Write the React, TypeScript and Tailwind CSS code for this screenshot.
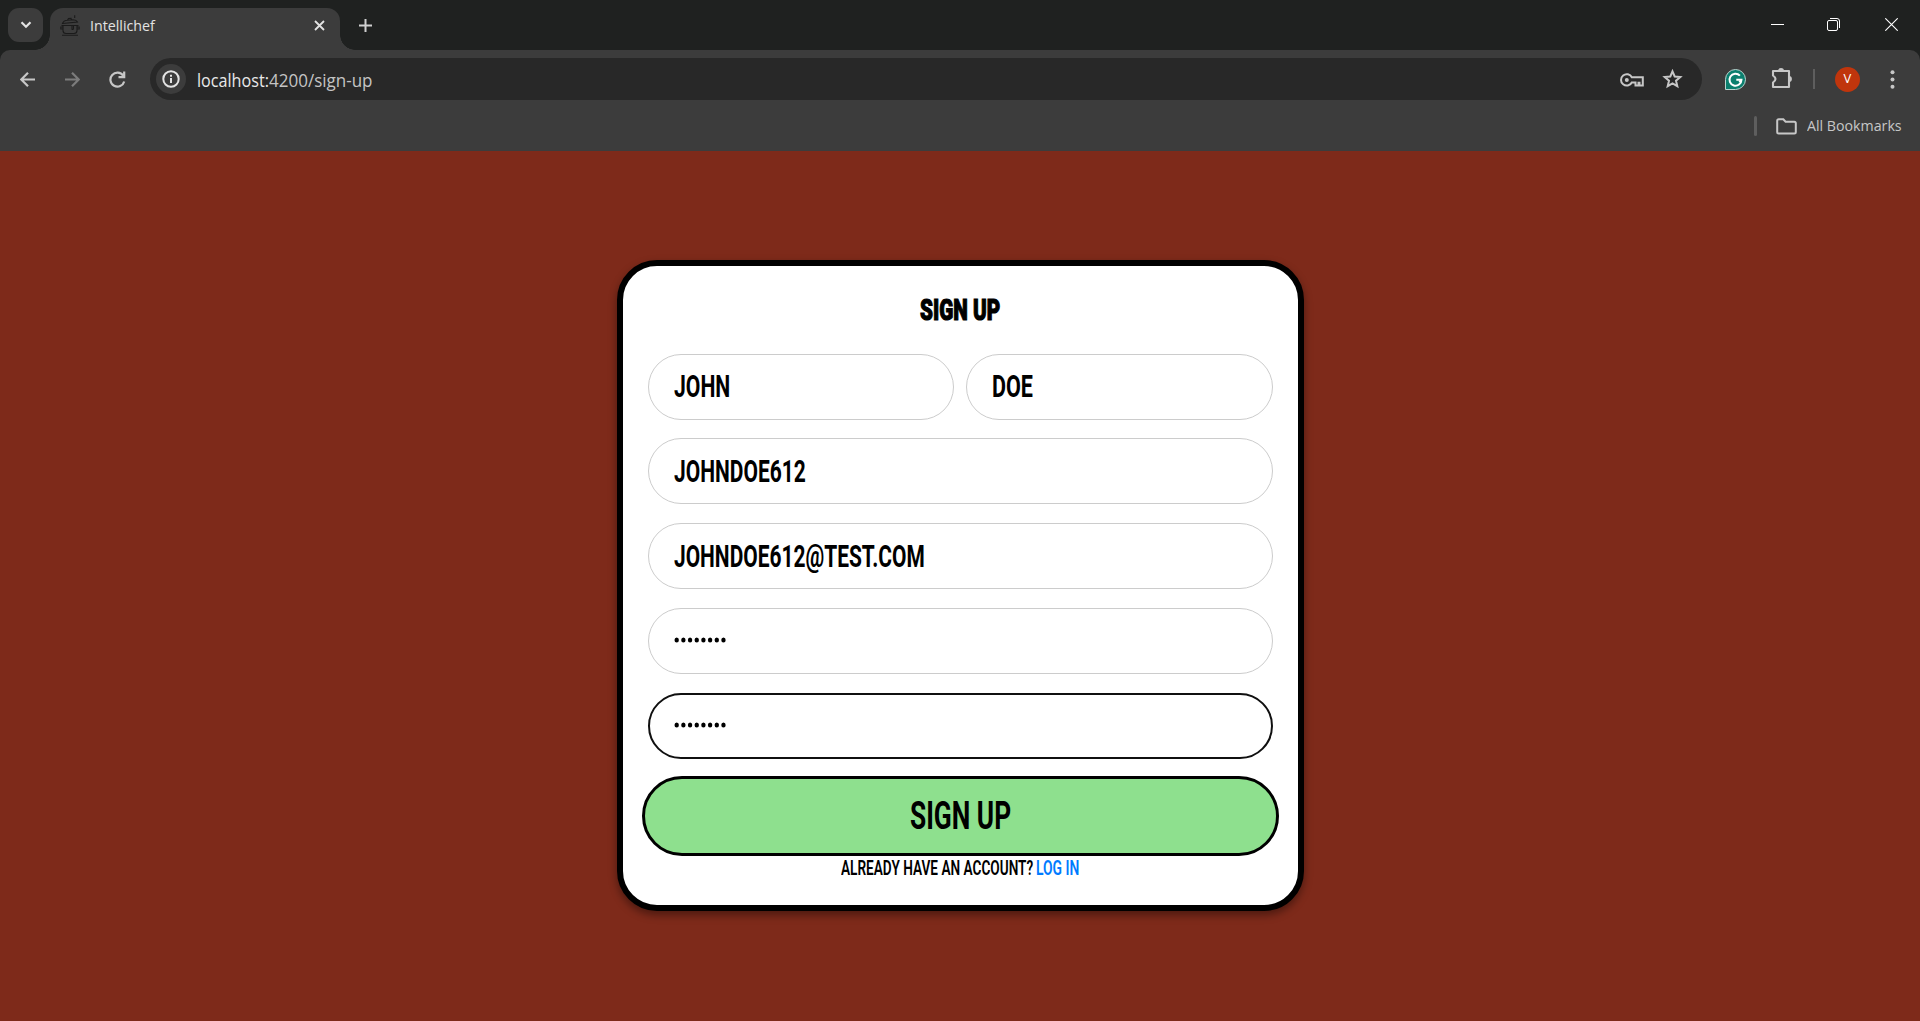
import { useLayoutEffect, useRef, useState } from "react";

type FitProps = { text: string; width: number; className?: string };

/* Sets a line of text condensed or expanded to a given width. */
function FitText({ text, width, className = "" }: FitProps) {
  const ref = useRef<HTMLSpanElement>(null);
  const [scale, setScale] = useState(1);
  useLayoutEffect(() => {
    if (ref.current) setScale(width / ref.current.offsetWidth);
  }, [width, text]);
  return (
    <span className="block shrink-0" style={{ width }}>
      <span
        ref={ref}
        className={`block w-max origin-left whitespace-pre ${className}`}
        style={{ transform: `scaleX(${scale})` }}
      >
        {text}
      </span>
    </span>
  );
}

function TabStrip() {
  return (
    <div className="flex h-[50px] items-start bg-[#1f2120] pt-2">
      <button className="ml-2 flex h-[34px] w-[35px] items-center justify-center rounded-[11px] bg-[#3c3c3c]">
        <svg width="12" height="8" viewBox="0 0 12 8" fill="none" stroke="#e3e3e3" strokeWidth="2.2">
          <path d="M1.5 1.3 6 5.8l4.5-4.5" />
        </svg>
      </button>
      <div className="relative ml-[7px] flex h-[42px] w-[290px] items-center rounded-t-[13px] bg-[#3c3c3c] pb-[7px] pl-[10px]">
        <span className="absolute -left-[15px] bottom-0 size-[15px] bg-[radial-gradient(circle_at_0_0,transparent_14.5px,#3c3c3c_15px)]" />
        <span className="absolute -right-[15px] bottom-0 size-[15px] bg-[radial-gradient(circle_at_100%_0,transparent_14.5px,#3c3c3c_15px)]" />
        <svg width="20" height="21" viewBox="0 0 20 21" fill="none" stroke="#1b1b1b" strokeWidth="1.1">
          <path d="M3 10.5v5q0 3 3 3h8q3 0 3-3v-5M1.500 10.500H18.500M2.700 12H.8v2h2M17.300 12h1.900v2h-2M2 20.200h16M12 10.500v3.700q1.300 1 1.500-1v-2.500" />
          <path d="M2.500 8.500 17.500 7q-1-2-4.500-2.200L7.500 5.200Q3.500 5.500 2.500 8.500ZM7.500 5 8.500 3.500 11 3.300 11.500 4.800M14.700.3v2.700" />
        </svg>
        <div className="ml-[10px]">
          <FitText text="Intellichef" width={65} className="font-['Open_Sans'] text-[14px] leading-[18px] text-[#e3e3e3]" />
        </div>
        <svg className="ml-auto mr-[15px]" width="11" height="11" viewBox="0 0 11 11" stroke="#e3e3e3" strokeWidth="1.8">
          <path d="m1 1 9 9M10 1l-9 9" />
        </svg>
      </div>
      <svg className="ml-[19px] mt-[11px]" width="13" height="13" viewBox="0 0 13 13" stroke="#d0d0d0" strokeWidth="2">
        <path d="M6.500 0v13M0 6.500h13" />
      </svg>
      <div className="ml-auto mr-[22px] mt-[10px] flex">
        <svg className="mr-[43px]" width="13" height="13" viewBox="0 0 13 13" stroke="#fff">
          <path d="M0 6.500h13" />
        </svg>
        <svg className="mr-[45px]" width="13" height="13" viewBox="0 0 13 13" fill="none" stroke="#fff">
          <rect x=".5" y="2.500" width="10" height="10" rx="1.500" />
          <path d="M3 .5h7q2.500 0 2.500 2.500v7" />
        </svg>
        <svg width="13" height="13" viewBox="0 0 13 13" stroke="#fff" strokeWidth="1.100">
          <path d="m.3.300 12.400 12.400M12.700.3.300 12.700" />
        </svg>
      </div>
    </div>
  );
}

function Toolbar() {
  return (
    <div className="bg-[#1f2120]">
      <div className="h-[101px] rounded-t-[10px] bg-[#3c3c3c] pt-2">
        <div className="flex h-[42px] items-center">
          <svg className="ml-[20px]" width="15" height="15" viewBox="0 0 15 15" fill="none" stroke="#c7c7c7" strokeWidth="2.200">
            <path d="M15 7.500H1.500M8 .8 1.300 7.500 8 14.200" />
          </svg>
          <svg className="ml-[30px]" width="15" height="15" viewBox="0 0 15 15" fill="none" stroke="#7c7c7c" strokeWidth="2.200">
            <path d="M0 7.500h13.500M7 .8l6.700 6.700L7 14.200" />
          </svg>
          <svg className="ml-[29px]" width="17" height="17" viewBox="0 0 17 17" fill="none" stroke="#c7c7c7" strokeWidth="2.200">
            <path d="M14.200 4.700A7 7 0 1 0 15.200 10.500M15.200 .5v5.700H9.500" />
          </svg>
          <div className="ml-[24px] flex h-[42px] w-[1552px] items-center rounded-full bg-[#282828] pl-[6px]">
            <span className="flex size-[30px] items-center justify-center rounded-full bg-[#3c3c3c]">
              <svg width="18" height="18" viewBox="0 0 18 18" fill="none" stroke="#e3e3e3" strokeWidth="2">
                <circle cx="9" cy="9" r="7.700" />
                <path d="M9 8v5M9 4.700v2" />
              </svg>
            </span>
            <div className="ml-[11px] flex pt-px font-['Open_Sans'] text-[17.5px] leading-[24px]">
              <FitText text="localhost:" width={72} className="text-[#e8e8e8]" />
              <FitText text="4200/sign-up" width={104} className="text-[#c4c4c4]" />
            </div>
            <svg className="ml-auto mt-[2px]" width="24" height="14" viewBox="0 0 24 14" fill="none" stroke="#c7c7c7" strokeWidth="2">
              <path d="M11.800 4.300A5.700 5.700 0 1 0 11.800 9.500H15.500V12.500H18.500V9.700H19.500V12.500H22.800V4.300Z" />
              <circle cx="6.800" cy="7" r="2" fill="#c7c7c7" stroke="none" />
            </svg>
            <svg className="ml-[18px] mr-[19px]" width="21" height="20" viewBox="0 0 21 20" fill="none" stroke="#c7c7c7" strokeWidth="2">
              <path d="m10.500 2.300 2.200 5.200 5.600.5-4.300 3.700 1.300 5.500-4.800-2.900-4.800 2.900L7 11.700 2.700 8l5.600-.5Z" />
            </svg>
          </div>
          <svg className="ml-[23px]" width="21" height="21" viewBox="0 0 21 21">
            <path d="M.5 20.500V10.500a10 10 0 1 1 10 10Z" fill="#0b7f6e" stroke="#b9d5d0" />
            <path d="M14.900 6.600a6 6 0 1 0 1.600 4.200h-5.200m5.200 0-2.200 2.500" fill="none" stroke="#fff" strokeWidth="2" />
          </svg>
          <svg className="ml-[25px] mb-[2px]" width="22" height="22" viewBox="0 0 22 22" fill="none" stroke="#c7c7c7" strokeWidth="2.100">
            <path d="M2 4H18V20H2V15.500Q7 12 2 8.500Z" strokeLinejoin="round" />
            <path d="M7 4a3 2.900 0 0 1 6 0ZM18 9a2.900 3 0 0 1 0 6Z" fill="#c7c7c7" stroke="none" />
          </svg>
          <span className="ml-[20px] h-5 w-[2px] bg-[#5e5e5e]" />
          <span className="ml-5 flex size-[25px] items-center justify-center rounded-full bg-[#c0350c] font-['Open_Sans'] text-[13px] text-white">V</span>
          <svg className="ml-[30px]" width="5" height="19" viewBox="0 0 5 19" fill="#c7c7c7">
            <circle cx="2.500" cy="2.200" r="2" />
            <circle cx="2.500" cy="9.500" r="2" />
            <circle cx="2.500" cy="16.800" r="2" />
          </svg>
        </div>
        <div className="mt-4 flex h-5 items-center justify-end pr-[18px]">
          <span className="h-5 w-[3px] rounded-sm bg-[#5e5e5e]" />
          <svg className="ml-[19px]" width="21" height="17" viewBox="0 0 21 17" fill="none" stroke="#c7c7c7" strokeWidth="2">
            <path d="M1.200 14V2.700Q1.200 1.200 2.700 1.200H7.300L9.600 3.700H18.300Q19.800 3.700 19.800 5.200V14Q19.800 15.500 18.300 15.500H2.700Q1.200 15.500 1.200 14Z" />
          </svg>
          <div className="ml-[10px]">
            <FitText text="All Bookmarks" width={95} className="font-['Open_Sans'] text-[14.5px] leading-5 text-[#c7c7c7]" />
          </div>
        </div>
      </div>
    </div>
  );
}

function Field({ value, width, secret, focused }: { value: string; width: number; secret?: boolean; focused?: boolean }) {
  return (
    <div
      className={`flex h-[66px] flex-1 items-center rounded-full bg-white ${
        focused ? "border-2 border-[#101010] pl-6" : "border border-[#cccccc] pl-[25px]"
      }`}
    >
      {secret ? (
        <svg className="mb-[3px]" width="54" height="6" viewBox="0 0 54 6">
          {value.split("").map((_, i) => (
            <ellipse key={i} cx={2.7 + i * 6.68} cy="3" rx="2.2" ry="2.5" />
          ))}
        </svg>
      ) : (
        <FitText text={value} width={width} className="text-[31px] leading-10 font-bold" />
      )}
    </div>
  );
}

function SignUpCard() {
  return (
    <form className="flex h-[651px] w-[687px] flex-col rounded-[40px] border-[6px] border-black bg-white px-[25px] pt-[24px] font-[Roboto] text-black shadow-[0_4px_8px_rgba(0,0,0,0.4)]">
      <h1 className="flex h-10 justify-center">
        <FitText text="SIGN UP" width={80} className="text-[30px] leading-10 font-black [-webkit-text-stroke:1.2px_black]" />
      </h1>
      <div className="mt-[24px] flex gap-3">
        <Field value="JOHN" width={56} />
        <Field value="DOE" width={41} />
      </div>
      <div className="mt-[18px] flex [&_span]:pt-px"><Field value="JOHNDOE612" width={132} /></div>
      <div className="mt-[19px] flex [&_span]:pt-px"><Field value="JOHNDOE612@TEST.COM" width={251} /></div>
      <div className="mt-[19px] flex"><Field value="password" width={52} secret /></div>
      <div className="mt-[19px] flex"><Field value="password" width={52} secret focused /></div>
      <button className="-mx-[6px] mt-[17px] flex h-20 items-center justify-center rounded-full border-[3px] border-black bg-[#8ee08e]">
        <FitText text="SIGN UP" width={101} className="text-[38px] leading-[44px] font-bold" />
      </button>
      <p className="flex justify-center gap-[3px] pt-px text-[20px] leading-[23px] font-semibold">
        <FitText text="ALREADY HAVE AN ACCOUNT?" width={192} />
        <span className="text-[#007bff]"><FitText text="LOG IN" width={43} /></span>
      </p>
    </form>
  );
}

export default function App() {
  return (
    <div className="flex h-[1021px] w-[1920px] flex-col overflow-hidden">
      <TabStrip />
      <Toolbar />
      <main className="flex flex-1 justify-center bg-[#7e2a1a] pt-[109px]">
        <SignUpCard />
      </main>
    </div>
  );
}
